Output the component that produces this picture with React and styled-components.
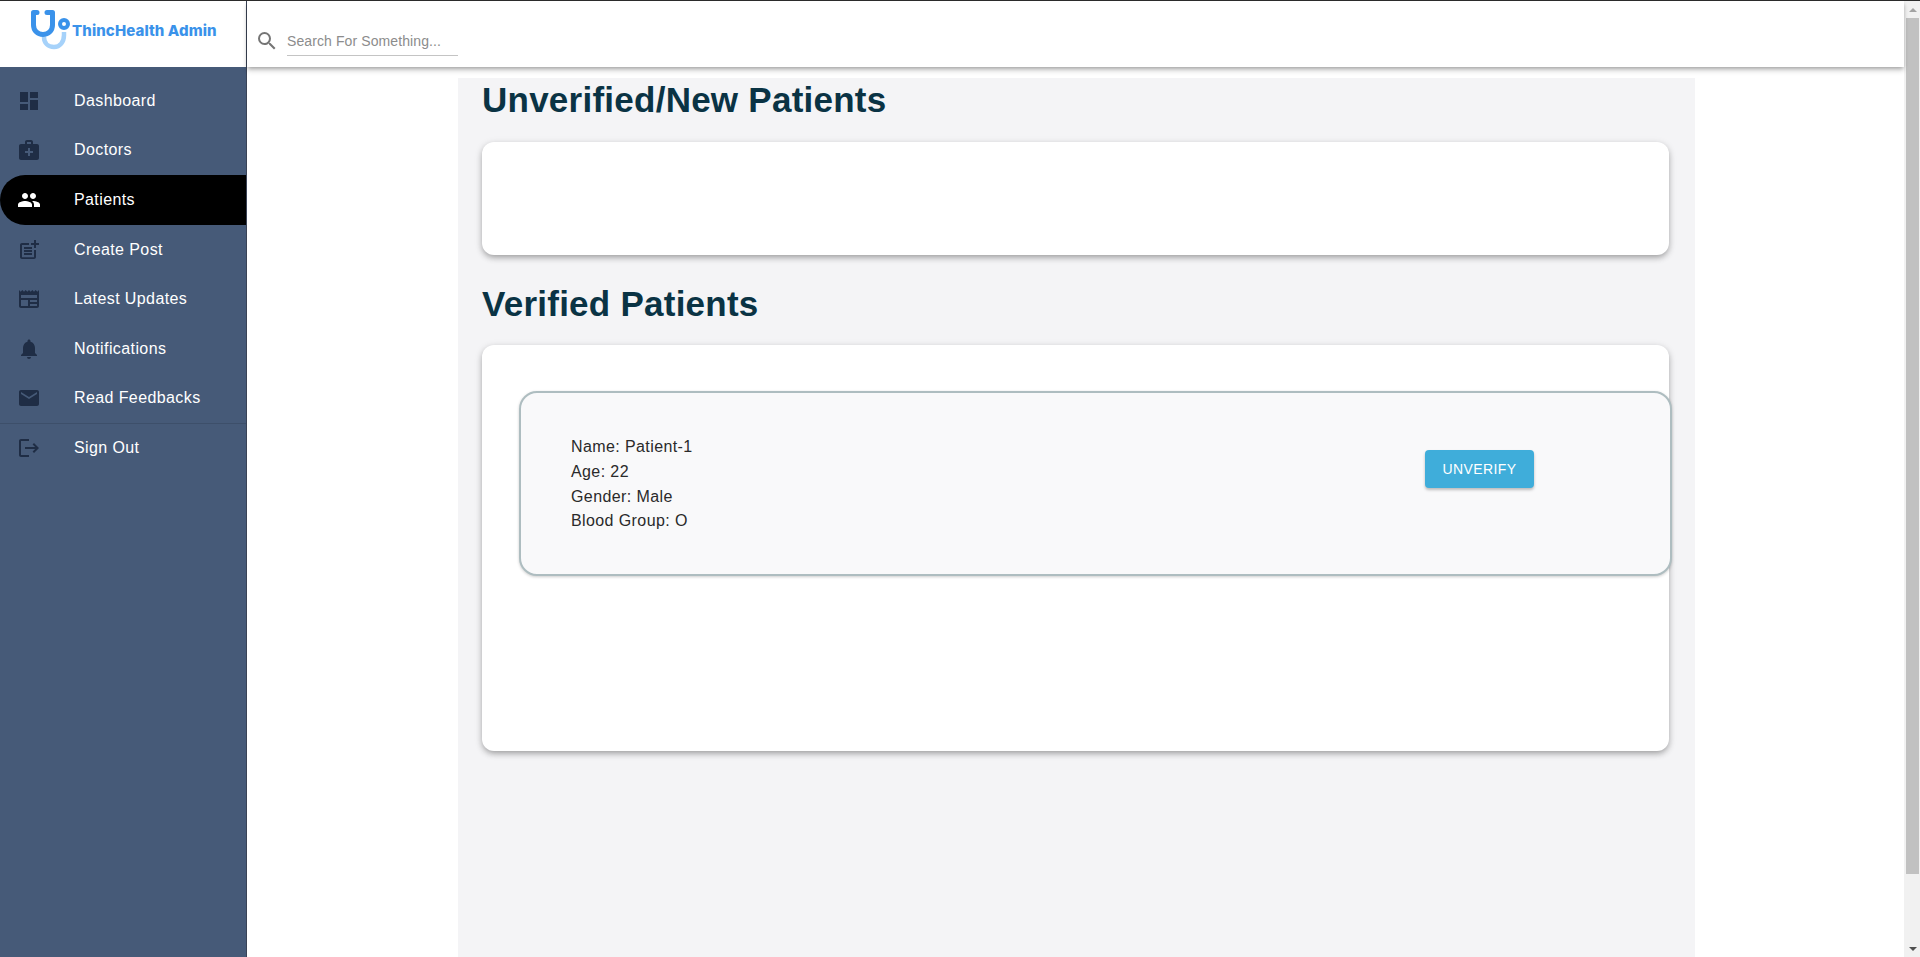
import React from "react";
import styled, { createGlobalStyle } from "styled-components";
import {
  MdDashboard,
  MdMedicalServices,
  MdPeople,
  MdPostAdd,
  MdNewspaper,
  MdNotifications,
  MdEmail,
  MdLogout,
  MdSearch,
} from "react-icons/md";

const GlobalStyle = createGlobalStyle`
  body {
    margin: 0;
    background: #fff;
    font-family: "Liberation Sans", Arial, sans-serif;
  }
`;

const Shell = styled.div`
  display: grid;
  grid-template-columns: 247px 1fr 16px;
  grid-template-rows: 66px 1fr;
  height: 957px;
  overflow: hidden;
  border-top: 1px solid #2b2b2b;
  box-sizing: border-box;
`;

const Brand = styled.div`
  border-right: 1px solid #3a4356;
  display: flex;
  align-items: flex-start;
  padding: 9px 0 0 31px;
  box-sizing: border-box;
  background: #fff;
`;

const BrandName = styled.span`
  font-family: "Inter", sans-serif;
  font-weight: 800;
  font-size: 15px;
  letter-spacing: 0.1px;
  color: #3a92ea;
  margin: 12px 0 0 1px;
  line-height: 18px;
  white-space: nowrap;
`;

const TopBar = styled.header`
  display: flex;
  align-items: flex-start;
  padding: 27px 0 0 8px;
  box-sizing: border-box;
  background: #fff;
  box-shadow: 0 2px 4px -1px rgba(0, 0, 0, 0.3), 0 4px 5px 0 rgba(0, 0, 0, 0.14);
  position: relative;
  z-index: 2;
  height: 66px;
`;

const SearchIcon = styled(MdSearch)`
  width: 24px;
  height: 24px;
  color: #757575;
  flex: none;
  margin-top: 1px;
`;

const SearchInput = styled.input`
  width: 171px;
  height: 28px;
  margin-left: 8px;
  padding: 0 0 2px;
  box-sizing: border-box;
  border: 0;
  border-bottom: 1px solid #c4c4c4;
  outline: none;
  font-family: "Liberation Sans", Arial, sans-serif;
  font-size: 14px;
  letter-spacing: 0.1px;
  background: transparent;
  &::placeholder {
    color: #8c8c8c;
    opacity: 1;
  }
`;

const ScrollTrack = styled.div`
  grid-column: 3;
  grid-row: 1 / span 2;
  display: flex;
  flex-direction: column;
  background: #f1f1f1;
`;

const ScrollButton = styled.div`
  height: 17px;
  display: flex;
  align-items: center;
  justify-content: center;
  flex: none;
  padding-left: 1px;
  &::after {
    content: "";
    border-left: 4px solid transparent;
    border-right: 4px solid transparent;
    border-${(p) => (p.$up ? "bottom" : "top")}: 4px solid ${(p) => (p.$up ? "#a3a3a3" : "#505050")};
  }
`;

const ScrollThumb = styled.div`
  height: 856px;
  margin: 0 1px 0 2px;
  background: #c1c1c1;
  flex: none;
`;

const ScrollSpacer = styled.div`
  flex: 1;
`;

const Sidebar = styled.nav`
  background: #465a78;
  border-right: 1px solid #3a4356;
  padding-top: 9px;
`;

const NavItem = styled.div`
  display: flex;
  align-items: center;
  height: 49.6px;
  padding-left: 17px;
  border-radius: 25px 0 0 25px;
  background: ${(p) => (p.$active ? "#000" : "transparent")};
  color: #fff;
  font-size: 16px;
  letter-spacing: 0.4px;
  svg {
    width: 24px;
    height: 24px;
    flex: none;
    color: ${(p) => (p.$active ? "#fff" : "#1f2d45")};
    margin-right: 33px;
  }
`;

const NavDivider = styled.hr`
  margin: 0 0 -1px;
  border: 0;
  border-top: 1px solid #3d4f6a;
`;

const Main = styled.main`
  padding: 11px 0 0 211px;
  min-height: 0;
`;

const Content = styled.div`
  width: 1237px;
  height: 100%;
  background: #f4f4f6;
  padding: 0 24px;
  box-sizing: border-box;
`;

const Heading = styled.h1`
  margin: 0;
  font-size: 35px;
  line-height: 44px;
  font-weight: 700;
  letter-spacing: 0.25px;
  color: #0a3344;
`;

const Panel = styled.section`
  width: 1187px;
  height: ${(p) => p.$height}px;
  margin: ${(p) => p.$top}px 0 ${(p) => p.$bottom}px;
  border-radius: 12px;
  background: #fff;
  box-shadow: 0 3px 6px -1px rgba(0, 0, 0, 0.3), 0 2px 8px 0 rgba(0, 0, 0, 0.12);
  padding: 46px 0 0 37px;
  box-sizing: border-box;
`;

const PatientCard = styled.article`
  width: 1153px;
  height: 185px;
  box-sizing: border-box;
  display: flex;
  align-items: center;
  padding-left: 50px;
  background: #f9f9fa;
  border: 2px solid #aebdc0;
  border-radius: 18px;
  box-shadow: 0 1px 3px rgba(0, 0, 0, 0.2);
`;

const PatientInfo = styled.div`
  width: 854px;
  padding-top: 2px;
  font-size: 16px;
  line-height: 24.6px;
  letter-spacing: 0.4px;
  color: #2a2a2a;
`;

const ActionButton = styled.button`
  width: 109px;
  height: 38px;
  align-self: flex-start;
  margin-top: 57px;
  padding: 0;
  border: 0;
  border-radius: 4px;
  background: #3fadda;
  color: #fff;
  font-family: "Liberation Sans", Arial, sans-serif;
  font-size: 14px;
  letter-spacing: 0.4px;
  text-transform: uppercase;
  box-shadow: 0 2px 3px rgba(0, 0, 0, 0.25);
`;

const StethoscopeLogo = () => (
  <svg width="40" height="41" viewBox="0 0 40 41" fill="none">
    <path d="M13 27c0 6 4 10 10 10s10-5 10-12v-3" stroke="#a6d2fa" strokeWidth="4.5" />
    <path
      d="M6 2.5H2.5V15c0 5.5 4 9.5 9.5 9.5s9.5-4 9.5-9.5V2.5H16"
      stroke="#3a92ea"
      strokeWidth="5"
      strokeLinecap="round"
      strokeLinejoin="round"
    />
    <circle cx="33" cy="14" r="4" fill="#fff" stroke="#3a92ea" strokeWidth="4" />
  </svg>
);

const navItems = [
  { label: "Dashboard", icon: MdDashboard },
  { label: "Doctors", icon: MdMedicalServices },
  { label: "Patients", icon: MdPeople, active: true },
  { label: "Create Post", icon: MdPostAdd },
  { label: "Latest Updates", icon: MdNewspaper },
  { label: "Notifications", icon: MdNotifications },
  { label: "Read Feedbacks", icon: MdEmail },
];

const App = () => {
  return (
    <Shell>
      <GlobalStyle />
      <Brand>
        <StethoscopeLogo />
        <BrandName>ThincHealth Admin</BrandName>
      </Brand>
      <TopBar>
        <SearchIcon />
        <SearchInput placeholder="Search For Something..." />
      </TopBar>
      <ScrollTrack>
        <ScrollButton $up />
        <ScrollThumb />
        <ScrollSpacer />
        <ScrollButton />
      </ScrollTrack>
      <Sidebar>
        {navItems.map(({ label, icon: Icon, active }) => (
          <NavItem key={label} $active={active}>
            <Icon />
            {label}
          </NavItem>
        ))}
        <NavDivider />
        <NavItem>
          <MdLogout />
          Sign Out
        </NavItem>
      </Sidebar>
      <Main>
        <Content>
          <Heading>Unverified/New Patients</Heading>
          <Panel $height={113} $top={20} $bottom={27} />
          <Heading>Verified Patients</Heading>
          <Panel $height={406} $top={19} $bottom={0}>
            <PatientCard>
              <PatientInfo>
                <div>Name: Patient-1</div>
                <div>Age: 22</div>
                <div>Gender: Male</div>
                <div>Blood Group: O</div>
              </PatientInfo>
              <ActionButton>Unverify</ActionButton>
            </PatientCard>
          </Panel>
        </Content>
      </Main>
    </Shell>
  );
};

export default App;
